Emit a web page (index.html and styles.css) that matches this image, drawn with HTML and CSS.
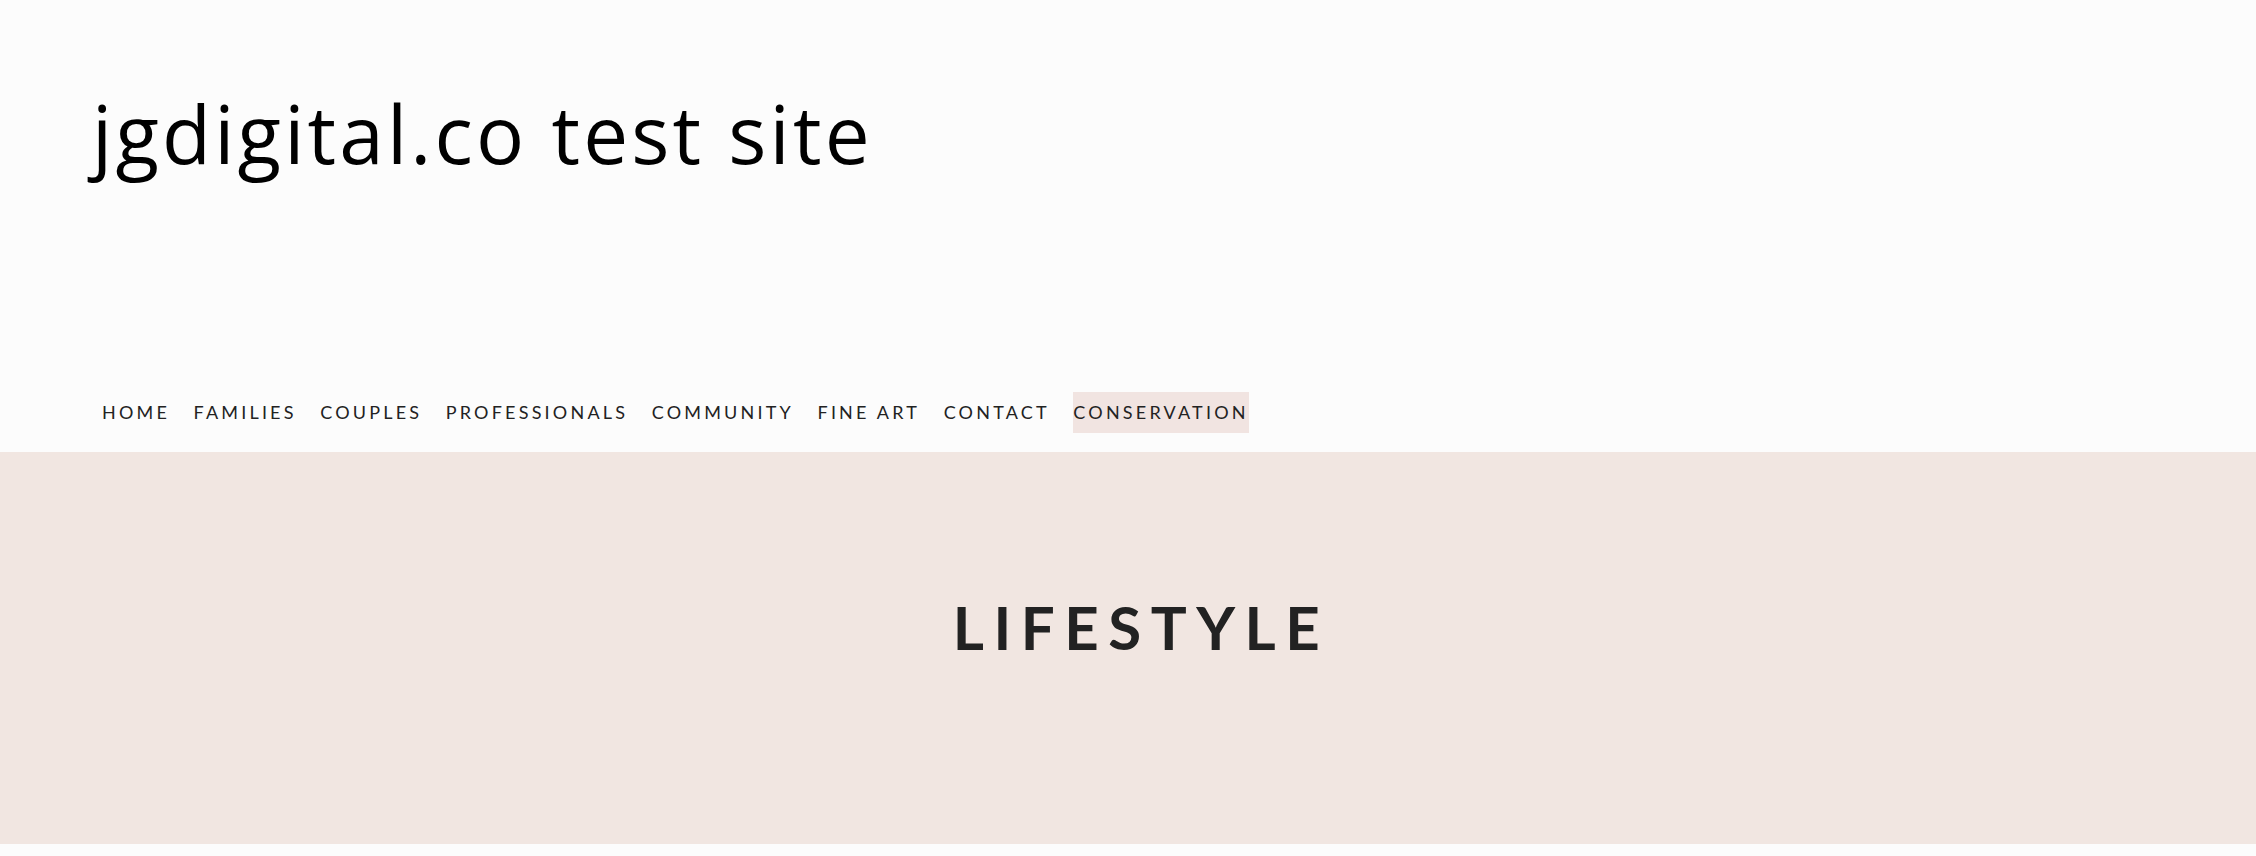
FILE: index.html
```html
<!DOCTYPE html>
<html lang="en">
<head>
<meta charset="utf-8">
<title>jgdigital.co test site</title>
<link rel="stylesheet" href="styles.css">
</head>
<body>
<header class="site-header">
  <div class="site-title"><a href="#">jgdigital.co test site</a></div>
  <nav class="main-nav">
    <a class="nav-link" href="#">HOME</a>
    <a class="nav-link" href="#">FAMILIES</a>
    <a class="nav-link" href="#">COUPLES</a>
    <a class="nav-link" href="#">PROFESSIONALS</a>
    <a class="nav-link" href="#">COMMUNITY</a>
    <a class="nav-link" href="#">FINE ART</a>
    <a class="nav-link" href="#">CONTACT</a>
    <a class="nav-link active" href="#">CONSERVATION</a>
  </nav>
</header>
<main>
  <section class="banner">
    <h1 class="banner-title">LIFESTYLE</h1>
  </section>
</main>
</body>
</html>
```

FILE: styles.css
```css
html, body {
  margin: 0;
  padding: 0;
  background: #fcfcfc;
}
body {
  font-family: "Lato", "Noto Sans", sans-serif;
  color: #222;
}
a {
  color: inherit;
  text-decoration: none;
}
.site-header {
  padding: 93px 0 19px 92px;
}
.site-title {
  font-family: "Open Sans", sans-serif;
  font-weight: 400;
  font-size: 80px;
  line-height: 1;
  letter-spacing: 3.2px;
  color: #000;
}
.main-nav {
  display: flex;
  gap: 23.5px;
  margin-top: 219px;
  margin-left: 10px;
}
.nav-link {
  font-size: 18px;
  line-height: 21px;
  letter-spacing: 3.2px;
  padding: 10px 0;
  color: #222;
}
.nav-link.active {
  background: #f1e4e1;
}
.banner {
  background: #f1e6e1;
  height: 392px;
  display: flex;
  justify-content: center;
  box-sizing: border-box;
  padding-top: 139px;
  padding-left: 26px;
}
.banner-title {
  margin: 0;
  font-family: "Lato", sans-serif;
  font-weight: 700;
  font-size: 60px;
  line-height: 72px;
  letter-spacing: 9.5px;
  color: #222;
}
```
